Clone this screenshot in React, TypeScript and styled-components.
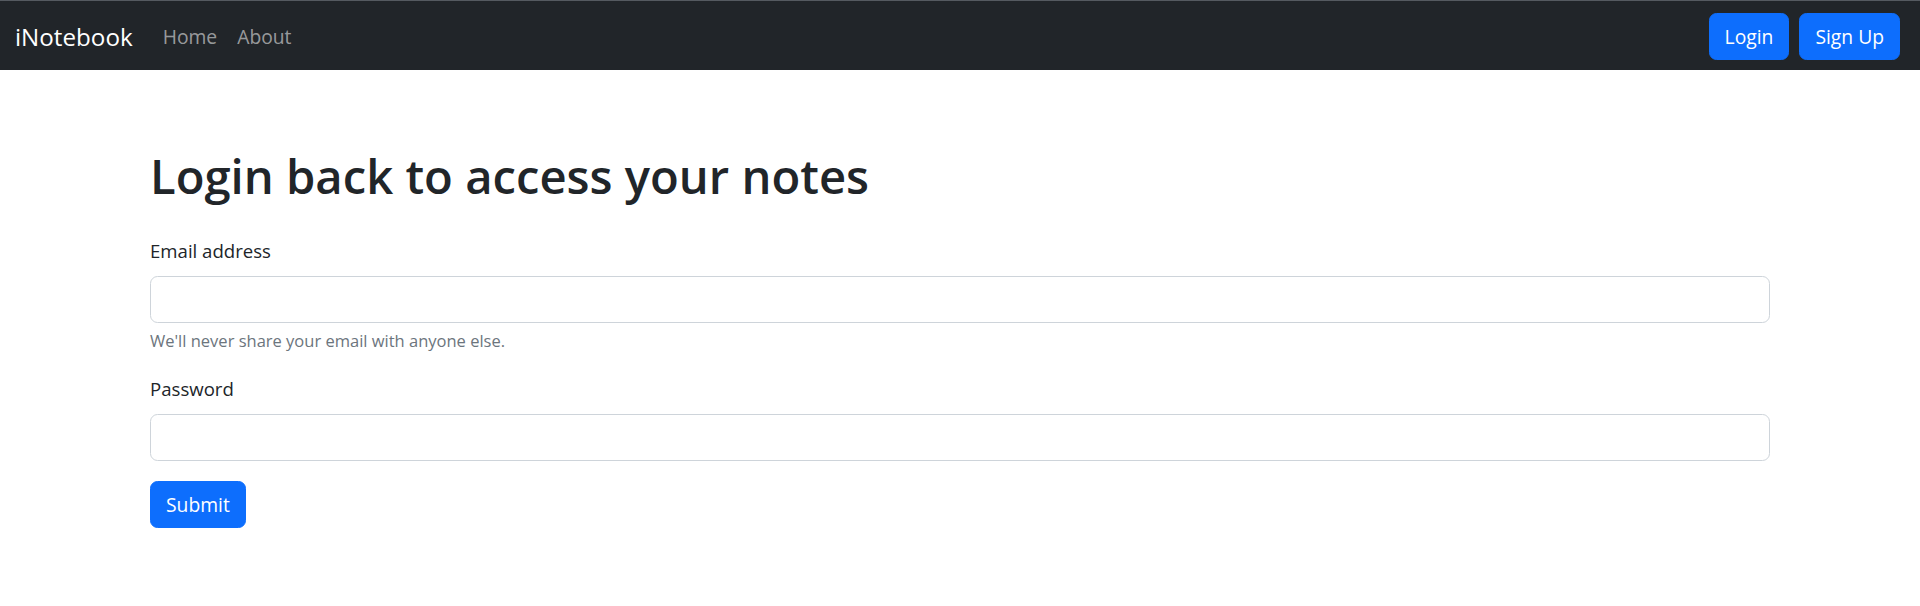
import React from "react";
import styled, { createGlobalStyle } from "styled-components";

const GlobalStyle = createGlobalStyle`
  *, *::before, *::after { box-sizing: border-box; }
  body {
    margin: 0;
    background: #ffffff;
    color: #212529;
    font-family: "Open Sans", "Noto Sans", sans-serif;
  }
`;

const NavBar = styled.nav`
  height: 70px;
  border-top: 1px solid #555a60;
  background: #212529;
  display: flex;
  align-items: center;
  padding: 2px 15px 0;
`;

const Brand = styled.a`
  color: #ffffff;
  font-size: 24.2px;
  margin-right: 20px;
  text-decoration: none;
  line-height: 1.5;
  padding-top: 2px;
`;

const NavList = styled.ul`
  display: flex;
  list-style: none;
  margin: 0;
  padding: 2px 0 0;
  flex: 1;
`;

const NavLink = styled.a`
  display: block;
  padding: 10px;
  font-size: 19.3px;
  line-height: 1.5;
  color: rgba(255, 255, 255, 0.55);
  text-decoration: none;
`;

const Actions = styled.div`
  display: flex;
  align-items: center;
`;

const Button = styled.button`
  background: #0d6efd;
  color: #ffffff;
  border: 1px solid #0d6efd;
  border-radius: 7.5px;
  height: 47px;
  padding: 0 15px;
  font-family: inherit;
  font-size: 19.3px;
  cursor: pointer;
`;

const NavButton = styled(Button)`
  margin: 0 5px;
`;

const Container = styled.main`
  max-width: 1650px;
  margin: 0 auto;
  padding: 76px 15px 0;
`;

const Title = styled.h1`
  margin: 0 0 30px;
  font-size: 47.2px;
  font-weight: 600;
  line-height: 60px;
  color: #212529;
`;

const Field = styled.div`
  margin-bottom: 20px;
`;

const Label = styled.label`
  display: block;
  font-size: 18.6px;
  line-height: 30px;
  margin-bottom: 10px;
  color: #212529;
`;

const Input = styled.input`
  display: block;
  width: 100%;
  height: 47px;
  border: 1px solid #ced4da;
  border-radius: 7.5px;
  padding: 7px 15px;
  font-family: inherit;
  font-size: 18.6px;
  background: #fff;
  outline: none;
`;

const Help = styled.div`
  margin-top: 5px;
  font-size: 16.5px;
  line-height: 26px;
  color: #6c757d;
`;

export default function App() {
  return (
    <>
      <GlobalStyle />
      <NavBar>
        <Brand href="#">iNotebook</Brand>
        <NavList>
          <li><NavLink href="#">Home</NavLink></li>
          <li><NavLink href="#">About</NavLink></li>
        </NavList>
        <Actions>
          <NavButton>Login</NavButton>
          <NavButton>Sign Up</NavButton>
        </Actions>
      </NavBar>
      <Container>
        <Title>Login back to access your notes</Title>
        <form>
          <Field>
            <Label htmlFor="email">Email address</Label>
            <Input id="email" type="email" />
            <Help>We'll never share your email with anyone else.</Help>
          </Field>
          <Field>
            <Label htmlFor="password">Password</Label>
            <Input id="password" type="password" />
          </Field>
          <Button type="submit">Submit</Button>
        </form>
      </Container>
    </>
  );
}
